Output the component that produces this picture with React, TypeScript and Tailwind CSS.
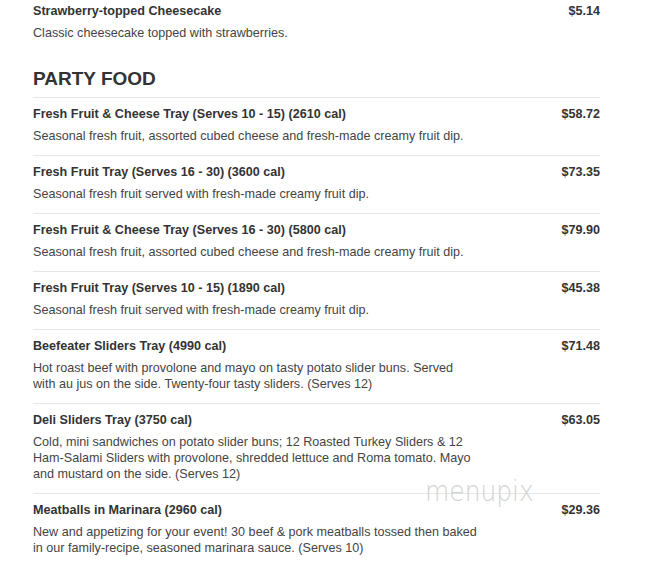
const items = [
  {
    name: 'Fresh Fruit & Cheese Tray (Serves 10 - 15) (2610 cal)',
    price: '$58.72',
    desc: 'Seasonal fresh fruit, assorted cubed cheese and fresh-made creamy fruit dip.',
  },
  {
    name: 'Fresh Fruit Tray (Serves 16 - 30) (3600 cal)',
    price: '$73.35',
    desc: 'Seasonal fresh fruit served with fresh-made creamy fruit dip.',
  },
  {
    name: 'Fresh Fruit & Cheese Tray (Serves 16 - 30) (5800 cal)',
    price: '$79.90',
    desc: 'Seasonal fresh fruit, assorted cubed cheese and fresh-made creamy fruit dip.',
  },
  {
    name: 'Fresh Fruit Tray (Serves 10 - 15) (1890 cal)',
    price: '$45.38',
    desc: 'Seasonal fresh fruit served with fresh-made creamy fruit dip.',
  },
  {
    name: 'Beefeater Sliders Tray (4990 cal)',
    price: '$71.48',
    desc: 'Hot roast beef with provolone and mayo on tasty potato slider buns. Served with au jus on the side. Twenty-four tasty sliders. (Serves 12)',
  },
  {
    name: 'Deli Sliders Tray (3750 cal)',
    price: '$63.05',
    desc: 'Cold, mini sandwiches on potato slider buns; 12 Roasted Turkey Sliders & 12 Ham-Salami Sliders with provolone, shredded lettuce and Roma tomato. Mayo and mustard on the side. (Serves 12)',
  },
  {
    name: 'Meatballs in Marinara (2960 cal)',
    price: '$29.36',
    desc: 'New and appetizing for your event! 30 beef & pork meatballs tossed then baked in our family-recipe, seasoned marinara sauce. (Serves 10)',
  },
];

function MenuItem({ name, price, desc }: { name: string; price: string; desc: string }) {
  return (
    <div className="border-t border-[#e6e6e6] pt-[8px] pb-[11.5px]">
      <div className="flex justify-between items-start gap-6">
        <div className="text-[12.6px] leading-[16px] font-bold text-[#333]">{name}</div>
        <div className="text-[12.6px] leading-[16px] font-bold text-[#333]">{price}</div>
      </div>
      <p className="mt-[5.5px] w-[445px] text-[12.6px] leading-[16px] text-[#444]">{desc}</p>
    </div>
  );
}

export default function App() {
  return (
    <div className="relative min-h-[573px] bg-white font-['Liberation_Sans',Arial,sans-serif]">
      <div className="w-[567px] ml-[33px]">
        {/* previous section tail */}
        <div className="pt-[3px]">
          <div className="flex justify-between items-start">
            <div className="text-[12.6px] leading-[16px] font-bold text-[#333]">Strawberry-topped Cheesecake</div>
            <div className="text-[12.6px] leading-[16px] font-bold text-[#333]">$5.14</div>
          </div>
          <p className="mt-[5.5px] text-[12.6px] leading-[16px] text-[#444]">
            Classic cheesecake topped with strawberries.
          </p>
        </div>

        <h2 className="mt-[27px] mb-[7.5px] text-[19px] leading-[22px] font-bold text-[#333]">PARTY FOOD</h2>

        <div>
          {items.map((item) => (
            <MenuItem key={item.name} {...item} />
          ))}
        </div>
      </div>

      {/* watermark */}
      <div className="absolute left-[425px] top-[483px] origin-left scale-x-[0.86] text-[29px] leading-[16px] font-light text-[#d2d2d2] font-['DejaVu_Sans',sans-serif] pointer-events-none">
        menupix
      </div>
    </div>
  );
}
